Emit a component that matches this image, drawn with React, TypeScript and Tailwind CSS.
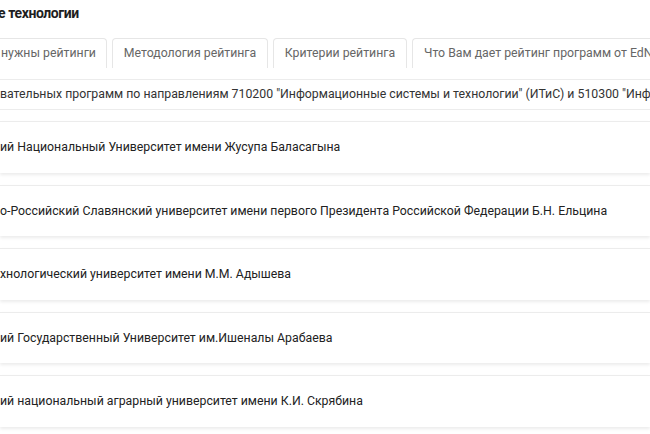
import React from "react";

const cards = [
  "ий Национальный Университет имени Жусупа Баласагына",
  "о-Российский Славянский университет имени первого Президента Российской Федерации Б.Н. Ельцина",
  "хнологический университет имени М.М. Адышева",
  "ий Государственный Университет им.Ишеналы Арабаева",
  "ий национальный аграрный университет имени К.И. Скрябина",
];

export default function App() {
  return (
    <div
      className="w-[650px] h-[434px] overflow-hidden bg-white text-[#222]"
      style={{ fontFamily: "Roboto, 'Noto Sans', sans-serif" }}
    >
      <div className="h-[38px] pt-[2px] -ml-[2px] text-[14px] font-bold leading-[22px] whitespace-nowrap text-[#1e1e1e] tracking-[-0.4px]">
        е технологии
      </div>
      <div className="flex gap-[5px] h-[30px] whitespace-nowrap text-[12.3px] text-[#666]">
        <div className="w-[107px] shrink-0 border border-l-0 border-b-0 border-[#e6e6e6] rounded-tr-[4px] flex items-center pl-[1px]">
          нужны рейтинги
        </div>
        <div className="w-[156px] shrink-0 border border-b-0 border-[#e6e6e6] rounded-t-[4px] flex items-center justify-center">
          Методология рейтинга
        </div>
        <div className="w-[134px] shrink-0 border border-b-0 border-[#e6e6e6] rounded-t-[4px] flex items-center justify-center">
          Критерии рейтинга
        </div>
        <div className="w-[260px] shrink-0 border border-b-0 border-r-0 border-[#e6e6e6] rounded-tl-[4px] flex items-center pl-[11px]">
          Что Вам дает рейтинг программ от EdNetwork
        </div>
      </div>
      <div className="border-t border-[#ececec] mt-[11px] h-[31px] border-b flex items-center whitespace-nowrap text-[12.3px] text-[#333]">
        вательных программ по направлениям 710200 "Информационные системы и технологии" (ИТиС) и 510300 "Информатика"
      </div>
      <div className="flex flex-col gap-[12px] mt-[11px]">
        {cards.map((c) => (
          <div
            key={c}
            className="h-[51.5px] shrink-0 border-t border-[#ececec] shadow-[0_2px_3px_rgba(0,0,0,0.08)] flex items-center whitespace-nowrap text-[12.3px] text-[#222]"
          >
            {c}
          </div>
        ))}
      </div>
    </div>
  );
}
